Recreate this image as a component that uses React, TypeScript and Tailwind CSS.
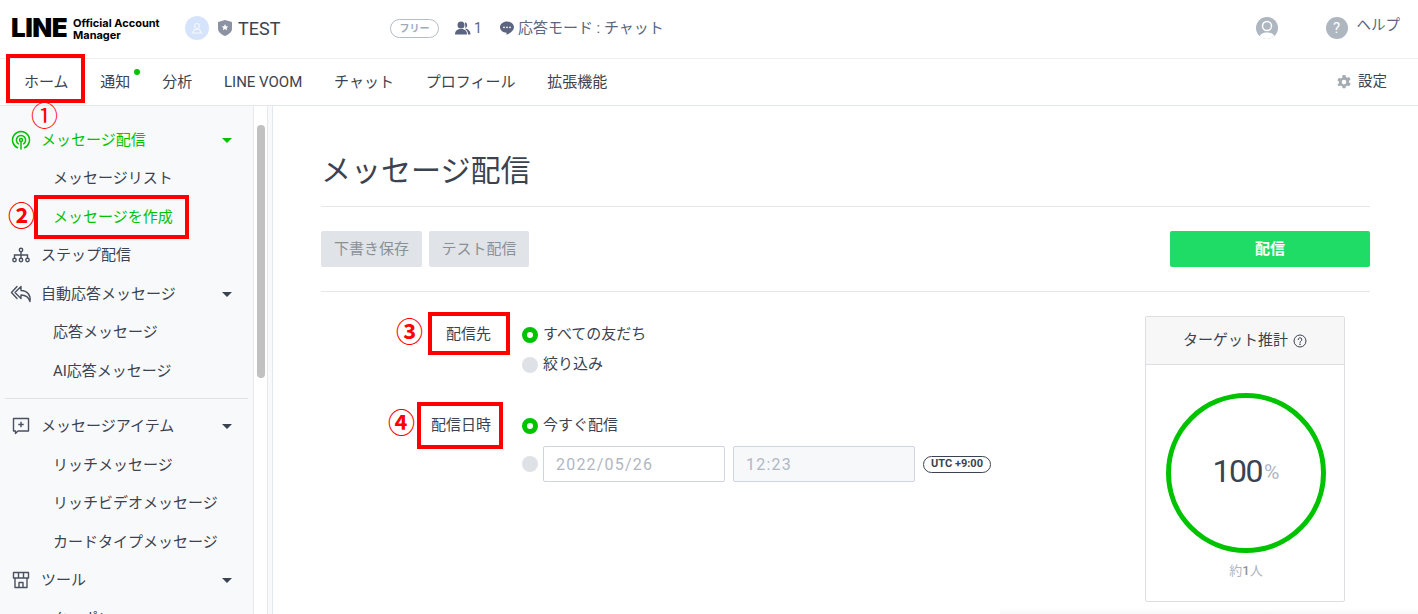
import { ReactNode } from 'react';

const sans = 'font-["Roboto","Noto_Sans_CJK_JP",sans-serif]';

function Caret({ green }: { green?: boolean }) {
  return (
    <svg width="10" height="5" viewBox="0 0 10 5" className="absolute left-[222px] top-1/2 -mt-[2px]">
      <path d="M0 0h10L5 5z" fill={green ? '#00c300' : '#3c4350'} />
    </svg>
  );
}

function IconBroadcast() {
  return (
    <svg width="20" height="20" viewBox="0 0 20 20" fill="none" stroke="#00c300" strokeWidth="1.5">
      <path d="M6.500 17.700A8.500 8.500 0 1 1 13.500 17.700" strokeLinecap="round" />
      <path d="M7.400 13.800a4.600 4.600 0 1 1 5.200 0" strokeLinecap="round" />
      <circle cx="10" cy="10" r="1.500" />
      <path d="M10 11.500V19" strokeLinecap="round" />
    </svg>
  );
}

function IconStep() {
  return (
    <svg width="20" height="20" viewBox="0 0 20 20" fill="none" stroke="#4a5160" strokeWidth="1.4">
      <circle cx="10" cy="5" r="1.700" />
      <circle cx="3.500" cy="15" r="1.700" />
      <circle cx="10" cy="15" r="1.700" />
      <circle cx="16.500" cy="15" r="1.700" />
      <path d="M10 7v6M3.500 13v-3h13v3" />
    </svg>
  );
}

function IconReplyAll() {
  return (
    <svg width="22" height="20" viewBox="0 0 22 20" fill="none" stroke="#4a5160" strokeWidth="1.4" strokeLinejoin="round" strokeLinecap="round">
      <path d="M7 2.500 1.500 8.500 7 14.500" />
      <path d="M11 2.500 5 8.500l6 6V11c4.500 0 7.500 1.500 9 6.500 1-6-2.500-11-9-11z" />
    </svg>
  );
}

function IconItem() {
  return (
    <svg width="18" height="18" viewBox="0 0 18 18" fill="none" stroke="#4a5160" strokeWidth="1.4" strokeLinejoin="round">
      <path d="M1.500 1.500h15v12.500H6l-2.500 2.500V14h-2z" />
      <path d="M9 4.800v5.400M6.300 7.500h5.400" />
    </svg>
  );
}

function IconStore() {
  return (
    <svg width="18" height="18" viewBox="0 0 18 18" fill="none" stroke="#4a5160" strokeWidth="1.4" strokeLinejoin="round">
      <path d="M1.500 1.500h15v5.500h-15zM6.500 1.500v5.500M11.500 1.500v5.500" />
      <path d="M3 7v9.500h12V7M7 16.500V11.500h4v5" />
    </svg>
  );
}

function SideGroup({ icon, label, green, caret = true }: { icon: ReactNode; label: string; green?: boolean; caret?: boolean }) {
  return (
    <div className={`relative flex h-[38.5px] items-center text-[15px] ${green ? 'text-[#00c300]' : 'text-[#3c4350]'}`}>
      <span className="flex w-[41px] justify-center pl-[5px] pr-[4px]">{icon}</span>
      {label}
      {caret && <Caret green={green} />}
    </div>
  );
}

function SideItem({ label, green }: { label: string; green?: boolean }) {
  return (
    <div className={`flex h-[38.5px] items-center pl-[53px] text-[15px] ${green ? 'text-[#00c300]' : 'text-[#3c4350]'}`}>
      {label}
    </div>
  );
}

function Radio({ on }: { on?: boolean }) {
  return on ? (
    <span className="h-4 w-4 shrink-0 rounded-full border-[5px] border-[#00c300] bg-white" />
  ) : (
    <span className="h-4 w-4 shrink-0 rounded-full bg-[#dee2e7]" />
  );
}

function RedBox({ className }: { className: string }) {
  return <span className={`pointer-events-none absolute border-[4px] border-[#ff0000] ${className}`} />;
}

function Mark({ children, className }: { children: string; className: string }) {
  return <span className={`absolute text-[27px] leading-none text-[#ff0000] ${className}`}>{children}</span>;
}

export default function App() {
  const navItems = ['通知', '分析', 'LINE VOOM', 'チャット', 'プロフィール', '拡張機能'];

  return (
    <div className={`relative h-[614px] w-[1418px] overflow-hidden bg-white text-[#3c4350] ${sans}`}>
      {/* 상단 헤더 */}
      <header className="flex h-[59px] items-center border-b border-[#eceef1] pb-[2px]">
        <div className="flex w-[390px] items-center pl-[11px]">
          <span className="w-[62px] shrink-0 font-['Inter',sans-serif] text-[26px] font-black leading-none tracking-[-0.5px] text-black">LINE</span>
          <span className="mt-[2px] w-[112px] shrink-0 font-['Inter',sans-serif] text-[11px] font-bold leading-[12px] text-black">
            Official Account
            <br />
            Manager
          </span>
          <span className="flex h-6 w-6 items-center justify-center rounded-full bg-[#d6e4fb]">
            <svg width="12" height="12" viewBox="0 0 12 12" fill="none" stroke="#f0f5fe" strokeWidth="1.2">
              <circle cx="6" cy="4" r="2.500" />
              <path d="M1.500 11h9l-2-3.500h-5z" />
            </svg>
          </span>
          <svg width="14" height="16" viewBox="0 0 14 16" className="ml-[9px]">
            <path d="M0 2 7 0l7 2v7c0 3-3.500 5.500-7 7-3.500-1.500-7-4-7-7z" fill="#8b93a3" />
            <path d="m7 4 1 2.200 2.300.2-1.700 1.600.5 2.300L7 9.100 4.900 10.300l.5-2.300-1.700-1.600L6 6.200z" fill="#fff" />
          </svg>
          <span className="ml-[6px] text-[18px]">TEST</span>
        </div>
        <span className="flex h-[19px] w-[49px] items-center justify-center rounded-full border border-[#b5bcc9] text-[10px] font-bold text-[#a3abb9]">
          フリー
        </span>
        <svg width="16" height="14" viewBox="0 0 16 14" className="ml-[16px]">
          <circle cx="6" cy="4" r="3.500" fill="#5b6580" />
          <path d="M0 13.500c0-4 2.500-5.500 6-5.500s6 1.500 6 5.500z" fill="#5b6580" />
          <path d="M10 1a3.500 3.500 0 0 1 0 6.500c3 .5 5.500 2 5.500 6H13c0-2.500-1-4-2.500-5" fill="#5b6580" />
        </svg>
        <span className="ml-[3px] text-[14px] text-[#5b6580]">1</span>
        <svg width="14" height="14" viewBox="0 0 14 14" className="ml-[18px]">
          <path d="M7 .5c3.900 0 7 2.500 7 5.800 0 3.200-3.500 5.800-7.500 7.500v-2C2.800 11.700 0 9.300 0 6.300 0 3 3.100.500 7 .500z" fill="#5b6580" />
          <circle cx="4" cy="6.300" r=".9" fill="#fff" />
          <circle cx="7" cy="6.300" r=".9" fill="#fff" />
          <circle cx="10" cy="6.300" r=".9" fill="#fff" />
        </svg>
        <span className="ml-[4px] text-[15px] text-[#5b6580]">応答モード : チャット</span>
        <span className="ml-auto flex h-[22px] w-[22px] items-center justify-center overflow-hidden rounded-full bg-[#aeb6c0]">
          <svg width="22" height="22" viewBox="0 0 22 22">
            <circle cx="11" cy="9" r="4.500" fill="none" stroke="#fff" strokeWidth="1.5" />
            <path d="M3 22c0-5 4-6.500 8-6.500s8 1.500 8 6.500z" fill="#fff" />
          </svg>
        </span>
        <span className="ml-[48px] flex h-[22px] w-[22px] items-center justify-center rounded-full bg-[#aeb6c0] text-[15px] text-white">?</span>
        <span className="ml-[9px] mr-[18px] -translate-y-[2px] text-[14.5px] text-[#5b6580]">ヘルプ</span>
      </header>

      {/* 메뉴 탭 */}
      <nav className="flex h-[47px] items-center border-b border-[#e3e7ee] pl-[24px] pr-[31px] text-[15px] text-[#3c4350]">
        <span className="relative mr-[31.8px]">
          ホーム
          <RedBox className="-bottom-[10px] -left-[18px] -right-[16px] -top-[17px]" />
          <Mark className="left-[7px] top-[33px]">①</Mark>
        </span>
        {navItems.map((item) => (
          <span key={item} className="relative mr-[31.8px]">
            {item}
            {item === '通知' && <span className="absolute -right-[10px] -top-[2px] h-[6px] w-[6px] rounded-full bg-[#00c300]" />}
          </span>
        ))}
        <span className="ml-auto flex items-center gap-[7px] text-[14.5px]">
          <svg width="14" height="14" viewBox="0 0 14 14">
            <path
              fillRule="evenodd"
              fill="#a3abb5"
              d="M5.600 0h2.800l.4 2 1.500.8 1.900-.7 1.400 2.400-1.500 1.300v1.700l1.500 1.300-1.400 2.400-1.900-.7-1.500.8-.4 2H5.600l-.4-2-1.500-.8-1.900.7L.4 9.500l1.500-1.300V6.500L.4 5.200l1.400-2.400 1.900.7 1.500-.8zM7 4.800a2.300 2.300 0 1 0 0 4.600 2.300 2.300 0 0 0 0-4.600z"
            />
          </svg>
          設定
        </span>
      </nav>

      <div className="flex h-[508px]">
        {/* 사이드바 */}
        <aside className="flex w-[273px] shrink-0 border-r border-[#e3e7ee] bg-[#f8f9fb]">
          <div className="w-[254px] shrink-0 border-r border-[#e6e8ec] pt-[15px]">
            <div className="-mb-[0.5px]">
              <SideGroup icon={<IconBroadcast />} label="メッセージ配信" green />
            </div>
            <SideItem label="メッセージリスト" />
            <div className="relative">
              <SideItem label="メッセージを作成" green />
              <RedBox className="-bottom-[3px] -top-[3px] left-[34px] right-[64px]" />
              <Mark className="left-[8px] top-[6px] font-bold">②</Mark>
            </div>
            <SideGroup icon={<IconStep />} label="ステップ配信" caret={false} />
            <SideGroup icon={<IconReplyAll />} label="自動応答メッセージ" />
            <SideItem label="応答メッセージ" />
            <SideItem label="AI応答メッセージ" />
            <div className="mx-[5px] mb-[8px] mt-[8px] border-t border-[#dfe2e7]" />
            <SideGroup icon={<IconItem />} label="メッセージアイテム" />
            <SideItem label="リッチメッセージ" />
            <SideItem label="リッチビデオメッセージ" />
            <SideItem label="カードタイプメッセージ" />
            <SideGroup icon={<IconStore />} label="ツール" />
            <SideItem label="クーポン" />
          </div>
          <div className="w-[14px] shrink-0 border-r border-[#e6e8ec] bg-white pl-[3px] pt-[19px]">
            <div className="h-[253px] w-[8px] rounded-full bg-[#c1c1c1]" />
          </div>
        </aside>

        {/* 메인 영역 */}
        <main className="flex-1 pl-[48px] pr-[48px]">
          <h1 className="mt-[45px] border-b border-[#e4e6ea] pb-[15px] text-[30px] font-normal leading-[40px] text-[#3c4350]">メッセージ配信</h1>
          <div className="flex items-center gap-[7px] border-b border-[#e4e6ea] py-[24px]">
            <button className="h-9 w-[101px] rounded-[2px] bg-[#e0e3e7] text-[15px] text-[#8a9098]">下書き保存</button>
            <button className="h-9 w-[100px] rounded-[2px] bg-[#e0e3e7] text-[15px] text-[#8a9098]">テスト配信</button>
            <button className="ml-auto h-9 w-[200px] rounded-[2px] bg-[#1edc66] text-[15px] font-bold text-white">配信</button>
          </div>

          <div className="flex">
            <div className="flex-1 pt-[31px]">
              {/* 배포 대상 */}
              <div className="flex">
                <div className="relative flex h-6 w-[170px] items-center justify-end text-[15px]">
                  <span className="-translate-y-[1px]">配信先</span>
                  <RedBox className="-bottom-[8px] -right-[19px] -top-[11px] left-[107px]" />
                  <Mark className="left-[75px] top-[-3px] font-bold">③</Mark>
                </div>
                <div className="ml-[31px]">
                  <label className="flex h-6 items-center gap-[5px] text-[15px]">
                    <Radio on />
                    <span className="-translate-y-[1px]">すべての友だち</span>
                  </label>
                  <label className="mt-[6px] flex h-6 items-center gap-[5px] text-[15px]">
                    <Radio />
                    <span className="-translate-y-[1px]">絞り込み</span>
                  </label>
                </div>
              </div>

              {/* 배포 일시 */}
              <div className="mt-[37px] flex">
                <div className="relative flex h-6 w-[170px] items-center justify-end text-[15px]">
                  <span className="-translate-y-[1px]">配信日時</span>
                  <RedBox className="-bottom-[11px] -top-[12px] left-[96px] right-[-12px]" />
                  <Mark className="left-[67px] top-[-3px] font-bold">④</Mark>
                </div>
                <div className="ml-[31px]">
                  <label className="flex h-6 items-center gap-[5px] text-[15px]">
                    <Radio on />
                    <span className="-translate-y-[1px]">今すぐ配信</span>
                  </label>
                  <div className="mt-[8px] flex items-center">
                    <Radio />
                    <input
                      readOnly
                      value="2022/05/26"
                      className="ml-[5px] h-9 w-[182px] rounded-[2px] border border-[#cfd5de] bg-white px-3 text-[16px] tracking-[1.2px] text-[#b0b7c3]"
                    />
                    <input
                      readOnly
                      value="12:23"
                      className="ml-2 h-9 w-[182px] rounded-[2px] border border-[#cfd5de] bg-[#f6f8fa] px-3 text-[16px] tracking-[1.2px] text-[#b0b7c3]"
                    />
                    <span className="ml-2 mt-[1px] flex h-[17px] w-[68px] items-center justify-center rounded-full border border-[#3c4350] text-[11px] font-bold">
                      UTC +9:00
                    </span>
                  </div>
                </div>
              </div>
            </div>

            {/* 타깃 추정 카드 */}
            <div className="mr-[25px] mt-[24px] flex h-[286px] w-[200px] shrink-0 flex-col rounded-[2px] border border-[#dcdee2]">
              <div className="flex h-[48px] items-center justify-center gap-[5px] border-b border-[#dcdee2] bg-[#f7f7f7] text-[15px]">
                ターゲット推計
                <svg width="14" height="14" viewBox="0 0 14 14" fill="none" stroke="#3c4350" strokeWidth="1">
                  <circle cx="7" cy="7" r="6" />
                  <path d="M5.200 5.600a1.800 1.800 0 1 1 2.600 1.600c-.6.300-.8.600-.8 1.200" strokeLinecap="round" />
                  <circle cx="7" cy="10.200" r=".4" />
                </svg>
              </div>
              <div className="flex flex-1 flex-col items-center pl-[2px] pt-[28px]">
                <div className="flex h-[160px] w-[160px] items-center justify-center rounded-full border-[5px] border-[#00c300] pb-[5px]">
                  <span className="text-[32px] leading-none tracking-[-1.5px]">100</span>
                  <span className="ml-[2px] mt-[4px] text-[21px] leading-none text-[#afb6c2]">%</span>
                </div>
                <div className="mt-[8px] text-[13px] text-[#afb6c2]">
                  約<span className="font-medium text-[#8a93a5]">1</span>人
                </div>
              </div>
            </div>
          </div>
        </main>
      </div>
      <div className="absolute bottom-0 right-0 h-[6px] w-[418px] bg-gradient-to-b from-transparent to-[#f6f6f6]" />
    </div>
  );
}
